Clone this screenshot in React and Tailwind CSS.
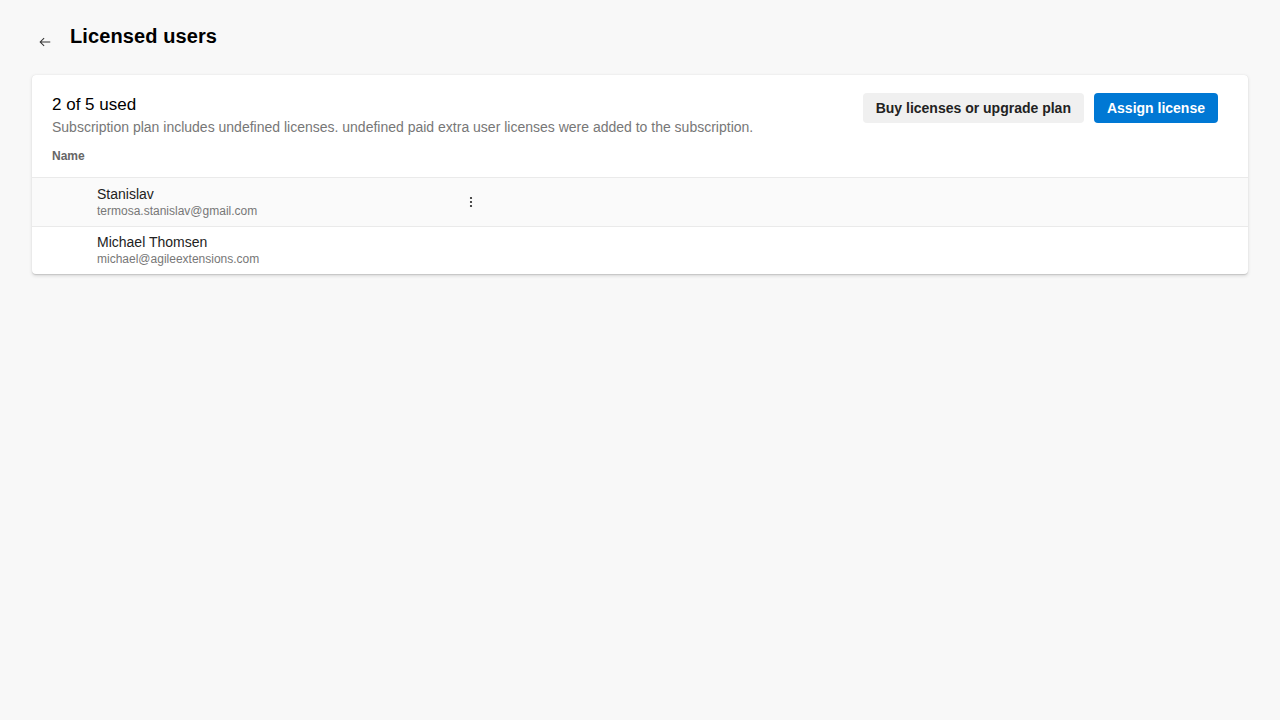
import React from 'react';

const users = [
  { name: 'Stanislav', email: 'termosa.stanislav@gmail.com', hover: true },
  { name: 'Michael Thomsen', email: 'michael@agileextensions.com', hover: false },
];

export default function App() {
  return (
    <div className="min-h-screen bg-[#f8f8f8] font-['Liberation_Sans',Arial,sans-serif] text-black">
      <div className="px-8 pt-6">
        {/* Page header */}
        <div className="flex items-center h-6">
          <button className="w-6 h-6 flex items-center justify-center mt-3 ml-[1px] text-[#333]">
            <svg width="14" height="14" viewBox="0 0 16 16" fill="none" stroke="currentColor" strokeWidth="1.2">
              <path d="M14 8H2.5M7 3.5L2.5 8L7 12.5" />
            </svg>
          </button>
          <h1 className="ml-[13px] text-[20px] font-bold leading-6 tracking-[0.1px]">Licensed users</h1>
        </div>

        {/* Card */}
        <div className="mt-[27px] bg-white rounded shadow-[0_1.6px_3.6px_rgba(0,0,0,0.13),0_0.3px_0.9px_rgba(0,0,0,0.11)]">
          <div className="flex justify-between pl-5 pr-[30px] pt-[18px]">
            <div className="pt-[1px]">
              <div className="text-[17px] leading-[22px]">2 of 5 used</div>
              <div className="mt-[1px] text-[14px] leading-5 text-[#777]">
                Subscription plan includes undefined licenses. undefined paid extra user licenses were added to the subscription.
              </div>
            </div>
            <div className="flex gap-[10px]">
              <button className="h-[30px] px-[13px] rounded-sm bg-[#f0f0f0] text-[14px] font-bold text-[#222]">
                Buy licenses or upgrade plan
              </button>
              <button className="h-[30px] px-[13px] rounded-sm bg-[#0078d4] text-[14px] font-bold text-white">
                Assign license
              </button>
            </div>
          </div>
          <div className="pl-5 pt-[11px] pb-[13px] text-[12px] leading-4 font-bold text-[#666]">Name</div>
          {users.map((u, i) => (
            <div
              key={u.email}
              className={`flex items-center border-t border-[#eaeaea] ${i === 0 ? 'h-[49px]' : 'h-12'} ${u.hover ? 'bg-[#fafafa]' : ''}`}
            >
              <div className={`pl-[65px] w-[430px] ${i === 0 ? '' : '-mt-[1px]'}`}>
                <div className="text-[14px] leading-[18px] text-[#222]">{u.name}</div>
                <div className="text-[12px] leading-[16px] text-[#777]">{u.email}</div>
              </div>
              {u.hover && (
                <div className="w-4 flex justify-center ml-[1px] -mt-[1px]">
                  <svg width="4" height="12" viewBox="0 0 4 12" fill="#222">
                    <circle cx="2" cy="2" r="1.1" />
                    <circle cx="2" cy="6" r="1.1" />
                    <circle cx="2" cy="10" r="1.1" />
                  </svg>
                </div>
              )}
            </div>
          ))}
        </div>
      </div>
    </div>
  );
}
